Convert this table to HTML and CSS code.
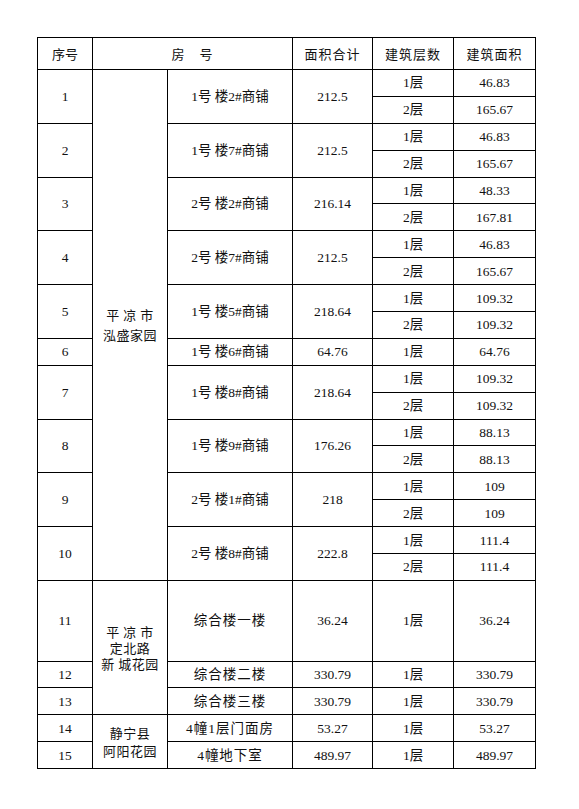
FILE: index.html
```html
<!DOCTYPE html>
<html lang="zh-CN">
<head>
<meta charset="utf-8">
<title>房号表</title>
<link rel="stylesheet" href="styles.css">
</head>
<body>
<table class="sheet">
  <colgroup>
    <col class="c1"><col class="c2"><col class="c3"><col class="c4"><col class="c5"><col class="c6">
  </colgroup>
  <tr class="head">
    <td>序号</td>
    <td colspan="2" class="wide">房　号</td>
    <td class="sp">面积合计</td>
    <td class="sp">建筑层数</td>
    <td class="sp">建筑面积</td>
  </tr>

  <tr class="r"><td rowspan="2">1</td><td rowspan="19" class="estate"><span class="ln">平 凉 市</span><span class="ln">泓盛家园</span></td><td rowspan="2">1号 楼2#商铺</td><td rowspan="2">212.5</td><td>1层</td><td>46.83</td></tr>
  <tr class="r"><td>2层</td><td>165.67</td></tr>

  <tr class="r"><td rowspan="2">2</td><td rowspan="2">1号 楼7#商铺</td><td rowspan="2">212.5</td><td>1层</td><td>46.83</td></tr>
  <tr class="r"><td>2层</td><td>165.67</td></tr>

  <tr class="r"><td rowspan="2">3</td><td rowspan="2">2号 楼2#商铺</td><td rowspan="2">216.14</td><td>1层</td><td>48.33</td></tr>
  <tr class="r"><td>2层</td><td>167.81</td></tr>

  <tr class="r"><td rowspan="2">4</td><td rowspan="2">2号 楼7#商铺</td><td rowspan="2">212.5</td><td>1层</td><td>46.83</td></tr>
  <tr class="r"><td>2层</td><td>165.67</td></tr>

  <tr class="r"><td rowspan="2">5</td><td rowspan="2">1号 楼5#商铺</td><td rowspan="2">218.64</td><td>1层</td><td>109.32</td></tr>
  <tr class="r"><td>2层</td><td>109.32</td></tr>

  <tr class="r"><td>6</td><td>1号 楼6#商铺</td><td>64.76</td><td>1层</td><td>64.76</td></tr>

  <tr class="r"><td rowspan="2">7</td><td rowspan="2">1号 楼8#商铺</td><td rowspan="2">218.64</td><td>1层</td><td>109.32</td></tr>
  <tr class="r"><td>2层</td><td>109.32</td></tr>

  <tr class="r"><td rowspan="2">8</td><td rowspan="2">1号 楼9#商铺</td><td rowspan="2">176.26</td><td>1层</td><td>88.13</td></tr>
  <tr class="r"><td>2层</td><td>88.13</td></tr>

  <tr class="r"><td rowspan="2">9</td><td rowspan="2">2号 楼1#商铺</td><td rowspan="2">218</td><td>1层</td><td>109</td></tr>
  <tr class="r"><td>2层</td><td>109</td></tr>

  <tr class="r"><td rowspan="2">10</td><td rowspan="2">2号 楼8#商铺</td><td rowspan="2">222.8</td><td>1层</td><td>111.4</td></tr>
  <tr class="r"><td>2层</td><td>111.4</td></tr>

  <tr class="tall"><td>11</td><td rowspan="3" class="estate e2"><span class="ln">平 凉 市</span><span class="ln">定北路</span><span class="ln">新 城花园</span></td><td class="sp">综合楼一楼</td><td>36.24</td><td>1层</td><td>36.24</td></tr>
  <tr class="r"><td>12</td><td class="sp">综合楼二楼</td><td>330.79</td><td>1层</td><td>330.79</td></tr>
  <tr class="r"><td>13</td><td class="sp">综合楼三楼</td><td>330.79</td><td>1层</td><td>330.79</td></tr>
  <tr class="r"><td>14</td><td rowspan="2" class="estate e3"><span class="ln">静宁县</span><span class="ln">阿阳花园</span></td><td class="sp">4幢1层门面房</td><td>53.27</td><td>1层</td><td>53.27</td></tr>
  <tr class="r"><td>15</td><td class="sp">4幢地下室</td><td>489.97</td><td>1层</td><td>489.97</td></tr>
</table>
</body>
</html>
```

FILE: styles.css
```css
html, body {
  margin: 0;
  padding: 0;
  background: #ffffff;
}

body {
  padding: 37px 0 0 37px;
  font-family: "Liberation Serif", "Noto Sans CJK SC", serif;
  font-size: 13.5px;
  color: #111111;
}

.sheet {
  border-collapse: collapse;
  table-layout: fixed;
  width: 498px;
}

.c1 { width: 55px; }
.c2 { width: 75px; }
.c3 { width: 125px; }
.c4 { width: 80px; }
.c5 { width: 81px; }
.c6 { width: 82px; }

.sheet td {
  border: 1px solid #000000;
  text-align: center;
  vertical-align: middle;
  padding: 0;
  line-height: 15px;
  white-space: nowrap;
  overflow: hidden;
}

.head { height: 32px; }
.head td { font-family: "Noto Sans CJK SC", sans-serif; font-size: 13px; }
.head td.sp { letter-spacing: 1px; }
.head td.wide { letter-spacing: 1px; }

.r { height: 26.9px; }
.tall { height: 80.6px; }

td.sp { letter-spacing: 1px; }

.estate {
  font-family: "Noto Sans CJK SC", sans-serif;
  font-size: 13px;
  letter-spacing: 0.5px;
}

.ln {
  display: block;
  height: 20px;
  line-height: 20px;
}

.e2 .ln { height: 16px; line-height: 16px; }
.e3 .ln { height: 18px; line-height: 18px; }
```
